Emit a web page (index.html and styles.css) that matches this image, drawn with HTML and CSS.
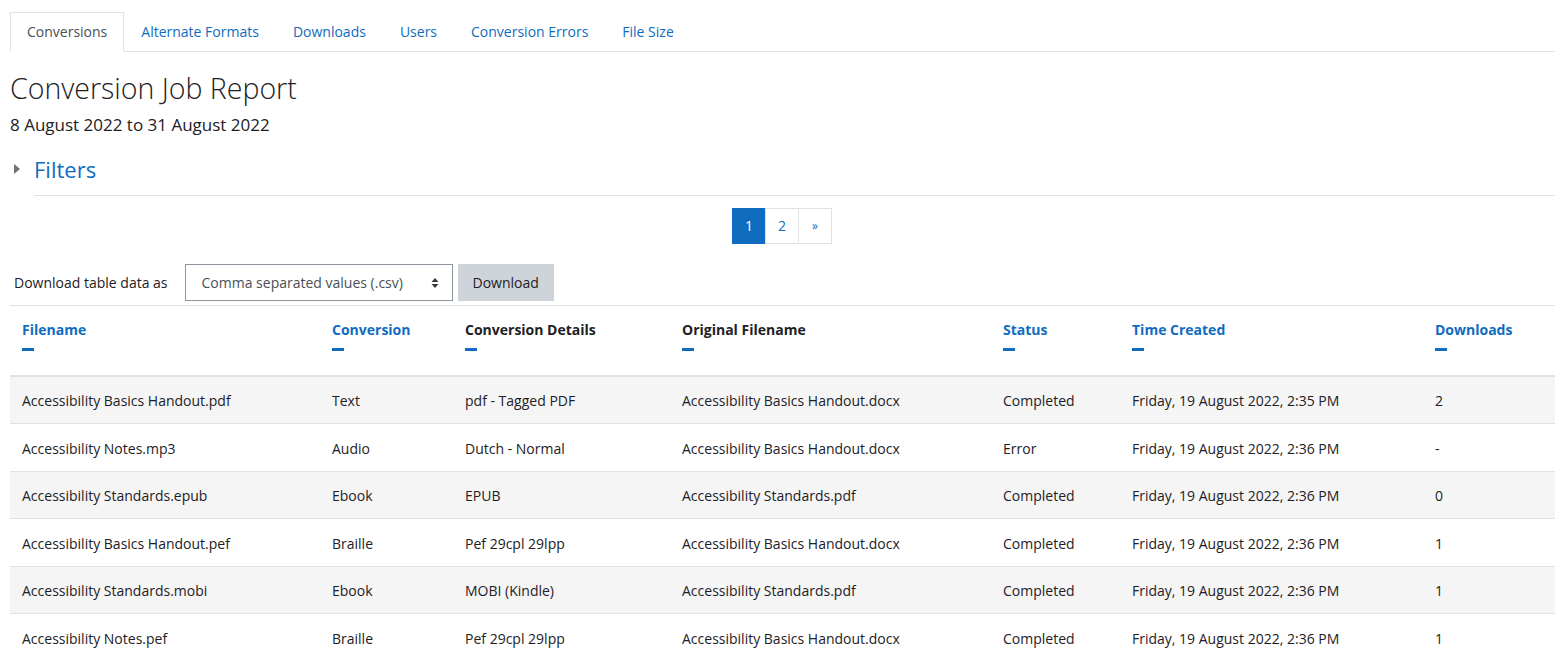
FILE: index.html
```html
<!DOCTYPE html>
<html lang="en">
<head>
  <meta charset="UTF-8" />
  <title>Conversion Job Report</title>
  <link rel="stylesheet" href="styles.css">
</head>
<body>

  <ul class="tabs">
    <li class="tab active">Conversions</li>
    <li class="tab">Alternate Formats</li>
    <li class="tab">Downloads</li>
    <li class="tab">Users</li>
    <li class="tab">Conversion Errors</li>
    <li class="tab">File Size</li>
  </ul>

  <h2 class="title">Conversion Job Report</h2>
  <div class="subtitle">8 August 2022 to 31 August 2022</div>

  <div class="filters">
    <span class="caret"></span>
    <span class="filters-label">Filters</span>
  </div>

  <div class="pager">
    <span class="page active">1</span>
    <span class="page">2</span>
    <span class="page next">&raquo;</span>
  </div>

  <div class="download-row">
    <label>Download table data as</label>
    <div class="select">
      <span>Comma separated values (.csv)</span>
      <svg width="8" height="12" viewBox="0 0 8 12"><path d="M4 1 L7.5 5 H0.5 Z M4 11 L7.5 7 H0.5 Z" fill="#343a40"/></svg>
    </div>
    <button class="btn">Download</button>
  </div>

  <table class="report">
    <colgroup>
      <col class="c-file">
      <col class="c-conv">
      <col class="c-details">
      <col class="c-orig">
      <col class="c-status">
      <col class="c-time">
      <col class="c-dl">
    </colgroup>
    <thead>
      <tr>
        <th class="sort">Filename<span class="dash"></span></th>
        <th class="sort">Conversion<span class="dash"></span></th>
        <th>Conversion Details<span class="dash"></span></th>
        <th>Original Filename<span class="dash"></span></th>
        <th class="sort">Status<span class="dash"></span></th>
        <th class="sort">Time Created<span class="dash"></span></th>
        <th class="sort">Downloads<span class="dash"></span></th>
      </tr>
    </thead>
    <tbody>
      <tr>
        <td>Accessibility Basics Handout.pdf</td><td>Text</td><td>pdf - Tagged PDF</td>
        <td>Accessibility Basics Handout.docx</td><td>Completed</td><td>Friday, 19 August 2022, 2:35 PM</td><td>2</td>
      </tr>
      <tr>
        <td>Accessibility Notes.mp3</td><td>Audio</td><td>Dutch - Normal</td>
        <td>Accessibility Basics Handout.docx</td><td>Error</td><td>Friday, 19 August 2022, 2:36 PM</td><td>-</td>
      </tr>
      <tr>
        <td>Accessibility Standards.epub</td><td>Ebook</td><td>EPUB</td>
        <td>Accessibility Standards.pdf</td><td>Completed</td><td>Friday, 19 August 2022, 2:36 PM</td><td>0</td>
      </tr>
      <tr>
        <td>Accessibility Basics Handout.pef</td><td>Braille</td><td>Pef 29cpl 29lpp</td>
        <td>Accessibility Basics Handout.docx</td><td>Completed</td><td>Friday, 19 August 2022, 2:36 PM</td><td>1</td>
      </tr>
      <tr>
        <td>Accessibility Standards.mobi</td><td>Ebook</td><td>MOBI (Kindle)</td>
        <td>Accessibility Standards.pdf</td><td>Completed</td><td>Friday, 19 August 2022, 2:36 PM</td><td>1</td>
      </tr>
      <tr>
        <td>Accessibility Notes.pef</td><td>Braille</td><td>Pef 29cpl 29lpp</td>
        <td>Accessibility Basics Handout.docx</td><td>Completed</td><td>Friday, 19 August 2022, 2:36 PM</td><td>1</td>
      </tr>
    </tbody>
  </table>

</body>
</html>
```

FILE: styles.css
```css
body {
  margin: 12px 10px 0;
  font-family: "Open Sans", "Noto Sans", sans-serif;
  font-size: 14px;
  color: #1d2125;
  background-color: white;
  overflow: hidden;
}

.tabs {
  display: flex;
  list-style: none;
  margin: 0;
  padding: 0;
  border-bottom: 1px solid #dee2e6;
}

.tab {
  padding: 8px 16px;
  line-height: 22px;
  color: #0f6cbf;
  border: 1px solid transparent;
  margin-bottom: -1px;
}

.tab.active {
  color: #495057;
  border-color: #dee2e6 #dee2e6 white;
  background-color: white;
}

.title {
  margin: 18px 0 0;
  font-size: 28.5px;
  font-weight: 300;
  line-height: 36px;
}

.subtitle {
  margin-top: 7px;
  font-size: 17px;
  line-height: 24px;
}

.filters {
  display: flex;
  align-items: flex-start;
  margin-top: 15px;
}

.caret {
  width: 0;
  height: 0;
  border-top: 5px solid transparent;
  border-bottom: 5px solid transparent;
  border-left: 6px solid #6a737b;
  margin: 12px 14px 0 4px;
}

.filters-label {
  flex: 1;
  color: #0f6cbf;
  font-size: 22px;
  line-height: 34px;
  padding-bottom: 9px;
  border-bottom: 1px solid #dee2e6;
}

.pager {
  display: flex;
  justify-content: center;
  margin-top: 12px;
}

.page {
  width: 32px;
  height: 34px;
  line-height: 34px;
  text-align: center;
  color: #0f6cbf;
  border: 1px solid #dee2e6;
  margin-left: -1px;
}

.page.active {
  background-color: #0f6cbf;
  border-color: #0f6cbf;
  color: white;
}

.page.next {
  font-size: 12px;
}

.download-row {
  display: flex;
  align-items: center;
  margin-top: 20px;
  padding-left: 4px;
  gap: 5px;
}

.download-row label {
  margin-right: 12px;
}

.select {
  display: flex;
  align-items: center;
  justify-content: space-between;
  width: 268px;
  height: 37px;
  padding: 0 13px 0 16px;
  box-sizing: border-box;
  border: 1px solid #8f959e;
  color: #495057;
}

.btn {
  height: 37px;
  padding: 0 15px;
  border: none;
  background-color: #ced4da;
  color: #1d2125;
  font-family: inherit;
  font-size: 14px;
}

.report {
  width: 1545px;
  margin-top: 4px;
  border-collapse: collapse;
  table-layout: fixed;
  border-top: 1px solid #dee2e6;
}

.c-file { width: 310px; }
.c-conv { width: 133px; }
.c-details { width: 217px; }
.c-orig { width: 321px; }
.c-status { width: 129px; }
.c-time { width: 303px; }
.c-dl { width: 132px; }

.report th {
  text-align: left;
  vertical-align: top;
  padding: 14px 12px 0;
  height: 70px;
  box-sizing: border-box;
  font-weight: bold;
  border-bottom: 2px solid #dee2e6;
  line-height: 20px;
}

.report th.sort {
  color: #0f6cbf;
}

.dash {
  display: block;
  width: 12px;
  height: 3px;
  margin-top: 8px;
  background-color: #0f6cbf;
}

.report td {
  padding: 2px 12px 0;
  height: 44.5px;
  border-bottom: 1px solid #dee2e6;
  white-space: nowrap;
}

.report tbody tr:nth-child(odd) {
  background-color: #f5f5f5;
}
```
